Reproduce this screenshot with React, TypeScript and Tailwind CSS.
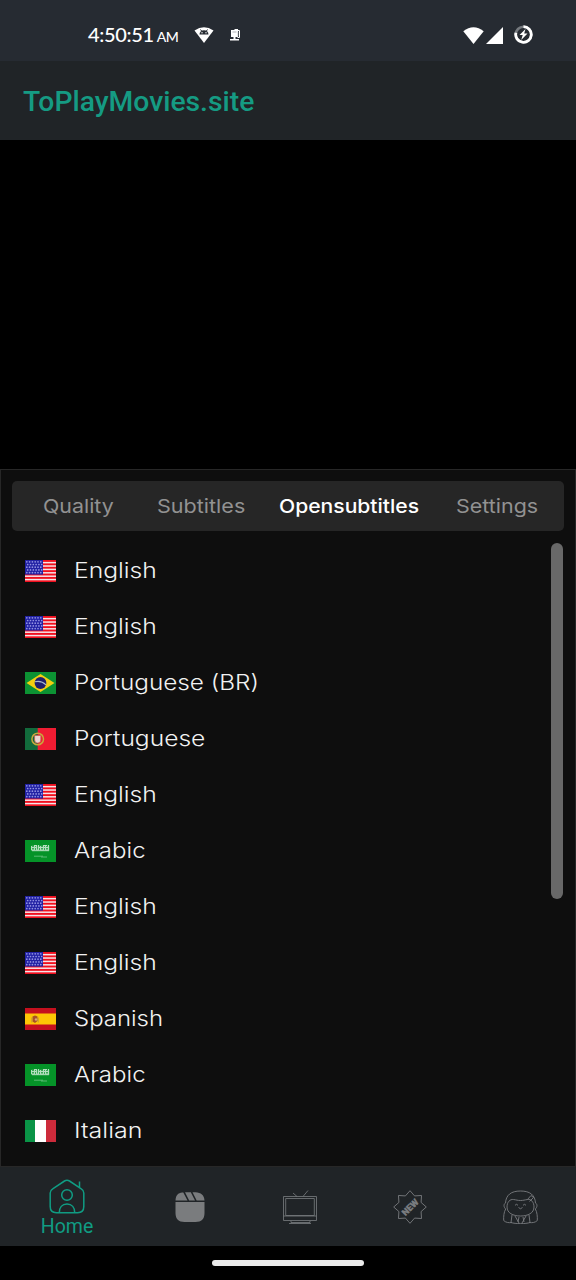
import React from "react";

const points = (n: number, outer: number, inner: number, c: number) =>
  Array.from({ length: n * 2 }, (_, i) => {
    const r = i % 2 ? inner : outer;
    const a = (i * Math.PI) / n - Math.PI / 2;
    return `${c + r * Math.cos(a)},${c + r * Math.sin(a)}`;
  }).join(" ");

function FlagUS() {
  return (
    <>
      <rect width="31" height="22" fill="#f4e4e8" />
      {[0, 1, 2, 3, 4, 5, 6].map((i) => (
        <rect key={i} y={i * 3.39} width="31" height="1.9" fill="#f00f1e" />
      ))}
      <rect width="18" height="14.6" fill="#2222a4" />
      {Array.from({ length: 30 }, (_, i) => (
        <circle key={i} cx={1.8 + (i % 6) * 2.8 + (Math.floor(i / 6) % 2) * 0.9} cy={1.8 + Math.floor(i / 6) * 2.7} r="0.85" fill="#9292e2" />
      ))}
    </>
  );
}
function FlagBR() {
  return (
    <>
      <rect width="31" height="22" fill="#0c9233" />
      <path d="M1.5 11 15.5 2 29.5 11 15.5 20Z" fill="#f3cf10" />
      <circle cx="15.5" cy="11" r="5.9" fill="#20206c" />
      <path d="M10 9.8c4-1 8 .2 11 3" stroke="#a9b9cf" strokeWidth="1.1" fill="none" />
    </>
  );
}
function FlagPT() {
  return (
    <>
      <rect width="31" height="22" fill="#f01c32" />
      <rect width="12.7" height="22" fill="#126b3c" />
      <circle cx="12.7" cy="11" r="5.8" fill="none" stroke="#c9a83c" strokeWidth="1.5" />
      <path d="M9.6 7.5h6.2v4.5a3.1 3.1 0 0 1-6.2 0Z" fill="#ead8d2" stroke="#cc5a50" strokeWidth=".8" />
    </>
  );
}
function FlagSA() {
  return (
    <>
      <rect width="31" height="22" fill="#059328" />
      <rect x="6.5" y="5.5" width="18" height="5.5" fill="#5fb876" opacity=".6" />
      <path d="M6.5 6v4h3V6m2 0v4h2V5m2 1v4h3V6m2 0v4h3V5M7 7.5h5M14 7.5h9M7 10.7h17M9 5.5h3M18 5.5h4" stroke="#b4dfbf" strokeWidth="1" fill="none" />
      <path d="M9 16.2h9M16 17h6" stroke="#65bd7b" strokeWidth="0.9" />
    </>
  );
}
function FlagES() {
  return (
    <>
      <rect width="31" height="22" fill="#c5101e" />
      <rect y="5.5" width="31" height="11" fill="#fdc605" />
      <path d="M7.5 8.500 10 7.500l2.500 1V13L10 15l-2.500-1.500Z" fill="#a85228" />
      <path d="M6.800 9.500v5M13.300 9.500v5" stroke="#c79a3a" />
      <circle cx="11" cy="11.500" r="1.200" fill="#dca47b" />
    </>
  );
}
function FlagIT() {
  return (
    <>
      <rect width="31" height="22" fill="#fff" />
      <rect width="10" height="22" fill="#0a9447" />
      <rect x="21" width="10" height="22" fill="#cd2b3b" />
    </>
  );
}

const flags = { us: FlagUS, br: FlagBR, pt: FlagPT, sa: FlagSA, es: FlagES, it: FlagIT };

type Language = { flag: keyof typeof flags; name: string; stretch: string };

const english: Language = { flag: "us", name: "English", stretch: "scale-x-[1.175]" };
const arabic: Language = { flag: "sa", name: "Arabic", stretch: "scale-x-[1.145]" };

const languages: Language[] = [
  english,
  english,
  { flag: "br", name: "Portuguese (BR)", stretch: "scale-x-[1.158]" },
  { flag: "pt", name: "Portuguese", stretch: "scale-x-[1.17]" },
  english,
  arabic,
  english,
  english,
  { flag: "es", name: "Spanish", stretch: "scale-x-[1.14]" },
  arabic,
  { flag: "it", name: "Italian", stretch: "scale-x-[1.19]" },
];

function StatusBar() {
  return (
    <div className="flex h-[61px] shrink-0 items-center bg-[#262b32] pt-[9px] pl-[88px] text-white">
      <div className="flex w-[90px] items-baseline font-['Lato'] whitespace-nowrap">
        <span className="text-[20px] leading-6 font-medium tracking-[-0.35px]">4:50:51</span>
        <span className="ml-[3px] text-[14px] leading-6 font-medium tracking-[-0.5px]">AM</span>
      </div>
      <svg className="ml-4 h-[18px] w-5" viewBox="0 0 20 18">
        <path d="M.5 4.5Q10-2 19.500 4.500L10 17Z" fill="#fff" />
        <path d="M5.500 8.500a4.500 4.200 0 0 1 9 0Z" fill="#262b32" />
        <path d="m6.500 3.500 1.500 2m5.500-2-1.500 2" stroke="#262b32" />
        <circle cx="8" cy="6.800" r=".7" fill="#fff" />
        <circle cx="12" cy="6.800" r=".7" fill="#fff" />
      </svg>
      <svg className="ml-[16px] h-3 w-[11px]" viewBox="0 0 11 12" fill="#fff">
        <path d="M1 1h3l1-1h3v8H1ZM0 10h3.500V8h2v2H9v1.500H0Z" />
        <path d="M8 1.500h1.500V8.500H7.500" stroke="#fff" fill="none" />
        <path d="M2.500 3h4M8.200 2.500v5" stroke="#8c9095" strokeWidth=".7" />
      </svg>
      <svg className="ml-[222px] h-[17px] w-[21px]" viewBox="0 0 21 17" fill="#fff">
        <path d="M.3 4.300Q10.500-4 20.700 4.300L10.500 17Z" />
      </svg>
      <svg className="ml-[2px] h-[17px] w-[17px]" viewBox="0 0 17 17" fill="#fff">
        <path d="M17 0v17H0Z" />
      </svg>
      <svg className="-mt-px ml-[11px] h-[19px] w-[19px]" viewBox="0 0 19 19" fill="none">
        <circle cx="9.500" cy="9.500" r="7.800" stroke="#75797e" strokeWidth="2.600" />
        <path d="M9.500 1.700a7.800 7.800 0 1 1-7.600 6" stroke="#fff" strokeWidth="2.800" />
        <path d="m11.500 4-6 6h3.200l-1.500 5 6.300-6.500h-3.300Z" fill="#fff" />
      </svg>
    </div>
  );
}

function Tabs() {
  return (
    <div className="mx-[11px] mt-[11px] flex h-[50px] items-center rounded-[5px] bg-[#262626] pt-0.5 pl-[31px] font-['Inter'] text-[19px] text-[#929292]">
      <div className="w-[114px]"><span className="inline-block origin-left scale-x-[1.125]">Quality</span></div>
      <div className="w-[122px]"><span className="inline-block origin-left scale-x-[1.135]">Subtitles</span></div>
      <div className="w-[177px] text-white"><span className="inline-block origin-left scale-x-[1.11] font-medium">Opensubtitles</span></div>
      <div><span className="inline-block origin-left scale-x-[1.13]">Settings</span></div>
    </div>
  );
}

function LanguageRow({ flag, name, stretch }: Language) {
  const Flag = flags[flag];
  return (
    <div className="flex h-14 items-center">
      <svg className="h-[22px] w-[31px]" viewBox="0 0 31 22"><Flag /></svg>
      <span className={`ml-[18px] inline-block origin-left font-['Inter'] text-[21px] font-light whitespace-nowrap text-[#f2f2f2] ${stretch}`}>{name}</span>
    </div>
  );
}

function BottomNav() {
  return (
    <nav className="flex h-[79px] shrink-0 bg-[#202427] text-[#7a7d80]">
      <div className="flex w-[134px] flex-col items-center pt-[11px] text-[#109c83]">
        <svg className="h-[36px] w-9" viewBox="0 0 36 36" fill="none" stroke="currentColor" strokeWidth="1.500">
          <path d="M1.200 15c0-2 .8-3.200 2.500-4.200L15.500 3c1.700-1 3.300-1 5 0l11.800 7.800c1.700 1 2.500 2.200 2.500 4.200V28.500c0 4-2.200 6.200-6.200 6.200H7.400c-4 0-6.200-2.200-6.200-6.200Z" />
          <path d="M30.500 9V3.500" />
          <circle cx="18" cy="17" r="5.300" />
          <path d="M10.300 34.500c0-5 2.700-8.500 7.700-8.500s7.700 3.500 7.700 8.500" />
        </svg>
        <span className="mt-0.5 font-['Roboto'] text-[19.500px] leading-[22px]">Home</span>
      </div>
      <div className="flex w-[111px] items-center justify-center">
        <svg className="h-[30px] w-[30px]" viewBox="0 0 30 30" fill="#7a7c7e">
          <path d="M.5 10h29v11c0 6-3 9-9 9h-11c-6 0-9-3-9-9ZM.5 8.500C.8 3.500 3 1 7.200.6L8.300.4 12.500 8.500ZM10 .3h5.800L20 8.500H14.200ZM17.500.3h3c5.500.2 8.700 3 9 8.200h-7.800Z" />
        </svg>
      </div>
      <div className="flex w-[110px] items-center justify-center">
        <svg className="h-[34px] w-[34px]" viewBox="0 0 34 34" fill="none" stroke="currentColor">
          <path d="M.5 6.500h33v24H.5ZM2.700 8.500h28.600v17H2.700ZM.5 26h33M8 31v1.500h19V31M6 33.500h22M10 3l4 3.500M25 .5l-5 6" strokeWidth=".8" />
        </svg>
      </div>
      <div className="flex w-[110px] items-center justify-center">
        <svg className="h-[34px] w-[34px]" viewBox="0 0 34 34" fill="none" stroke="currentColor" strokeWidth=".9">
          <polygon points={points(8, 16.3, 12, 17)} />
          <text x="17" y="20.400" textAnchor="middle" transform="rotate(-45 17 17)" fill="currentColor" stroke="currentColor" strokeWidth=".3" fontFamily="Roboto" fontSize="9" fontWeight="900">NEW</text>
        </svg>
      </div>
      <div className="flex w-[111px] items-center justify-center">
        <svg className="h-[34px] w-[35px]" viewBox="0 0 35 34" fill="none" stroke="currentColor" strokeWidth=".9">
          <path d="M2.500 13C3 5 8 1 17.500 1S32 5 32.500 13M2.500 13c-2 1-2 4 .2 6C.8 22 .5 27 .7 30.500c2 2 5 2.500 8 2M32.500 13c2 1 2 4-.2 6 1.900 3 2.200 8 2 11.500-2 2-5 2.500-8 2" />
          <path d="M4 17c0-5 3-8 6.500-7.500 3 .4 4 1 7 1s4-.6 7-1C28 9 31 12 31 17c0 6-6 9-13.500 9S4 23 4 17Z" />
          <path d="M24.500 9.500 28 5.500l2.500 2-4 4M12 15.300l1.500-1 1.500 1M20 15.300l1.500-1 1.500 1M15.500 17.500q2 2.500 4 0M9 25l-1 7.500c4 1.500 15 1.500 19 0l-1-7.500M12 26l4 7M16 27l-1 5M23 26l-4 7M20 27l1 5" />
        </svg>
      </div>
    </nav>
  );
}

export default function App() {
  return (
    <div className="flex h-[1280px] w-[576px] flex-col overflow-hidden bg-black">
      <StatusBar />
      <header className="flex h-[79px] shrink-0 items-center bg-[#202427] pl-[23px]">
        <h1 className="pt-1 font-['Roboto'] text-[28.3px] font-medium text-[#159b83]">ToPlayMovies.site</h1>
      </header>
      <div className="h-[329px] shrink-0 bg-black" />
      <main className="flex h-[698px] shrink-0 flex-col border border-[#272727] bg-[#0e0e0e]">
        <Tabs />
        <div className="mr-3 flex justify-between pt-3 pl-6">
          <div>
            {languages.map((l, i) => <LanguageRow key={i} {...l} />)}
          </div>
          <div className="h-[356px] w-3 rounded-full bg-[#686868]" />
        </div>
      </main>
      <BottomNav />
      <div className="flex h-[34px] shrink-0 justify-center bg-black pt-3.5">
        <div className="h-1.5 w-[152px] rounded-full bg-[#ebebeb]" />
      </div>
    </div>
  );
}
